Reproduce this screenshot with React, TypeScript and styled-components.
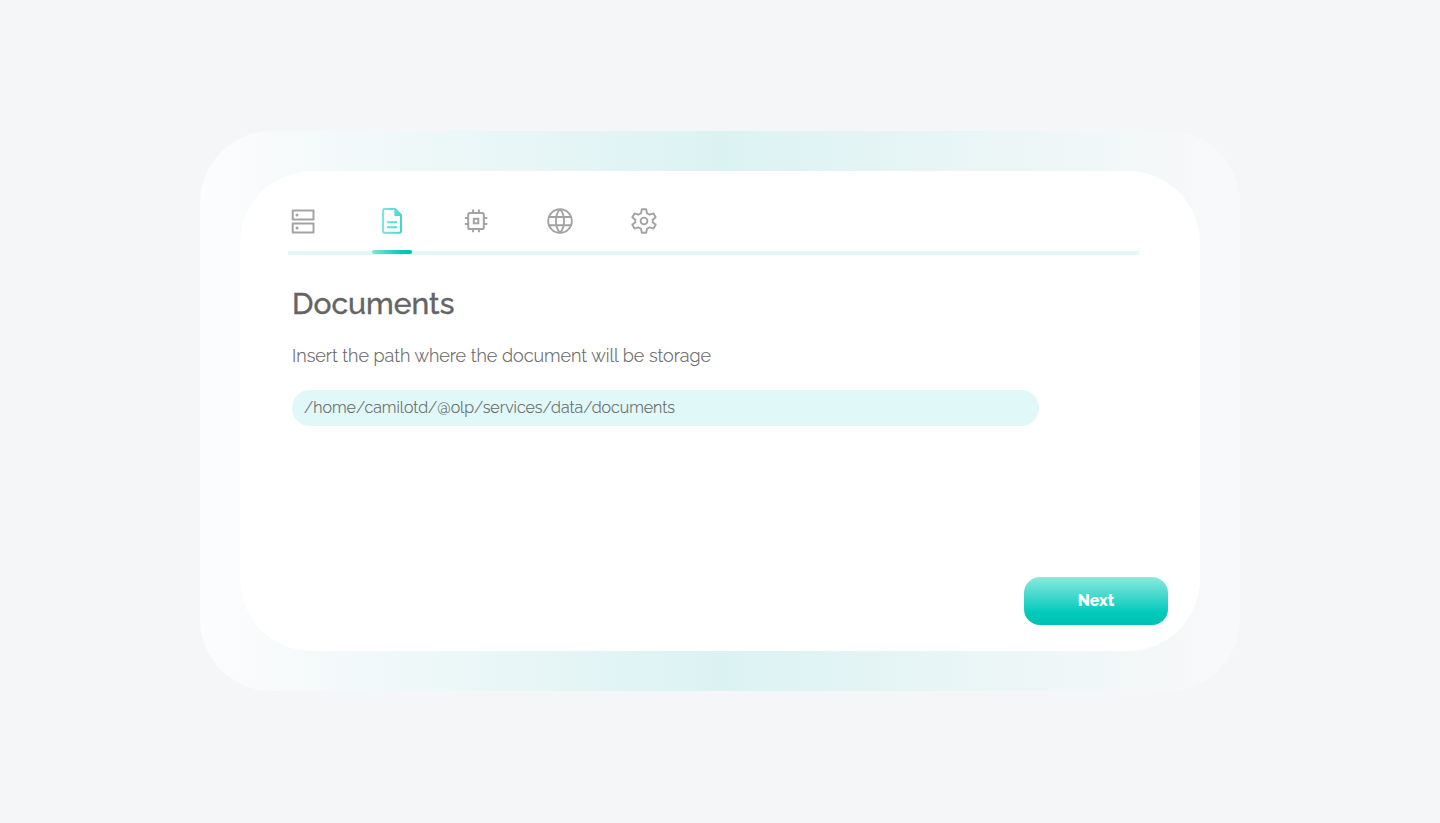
import React from "react";
import styled, { createGlobalStyle } from "styled-components";

const GlobalStyle = createGlobalStyle`
  * { box-sizing: border-box; }
  body {
    margin: 0;
    background: #f4f6f8;
    color: #646464;
    font-family: Raleway, Lato, sans-serif;
  }
`;

const Page = styled.main`
  height: 822px;
  display: flex;
  align-items: center;
  justify-content: center;
`;

const Frame = styled.div`
  width: 1040px;
  height: 560px;
  padding: 40px;
  border-radius: 72px;
  background: linear-gradient(90deg, #fcfcfd 0%, #dbf2f3 50%, #f9f9fa 100%);
`;

const Card = styled.section`
  width: 960px;
  height: 480px;
  padding: 30px 32px 26px 48px;
  border-radius: 72px;
  background: #fff;
  display: flex;
  flex-direction: column;
`;

const Tabs = styled.nav`
  width: 851px;
  height: 54px;
  display: flex;
  gap: 44px;
  border-bottom: 4px solid #e0f8f8;
`;

const Tab = styled.button<{ $start?: boolean }>`
  width: 40px;
  height: 53px;
  padding: 4px 0 0;
  border: 0;
  background: none;
  color: #a3a3a3;
  display: flex;
  flex-direction: column;
  align-items: ${(p) => (p.$start ? "flex-start" : "center")};
  justify-content: space-between;

  svg { display: block; flex: none; }
`;

const Marker = styled.span`
  width: 40px;
  height: 4px;
  border-radius: 2px;
  background: linear-gradient(90deg, #80e5da, #00c9b9 75%, #00c1b2);
`;

const Title = styled.h1`
  margin: 30px 0 0 4px;
  font-size: 30px;
  line-height: 38px;
  font-weight: 500;
  -webkit-text-stroke: 0.35px currentColor;
`;

const Hint = styled.p`
  margin: 21px 0 0 4px;
  font-size: 18px;
  line-height: 24px;
  font-weight: 300;
  -webkit-text-stroke: 0.15px currentColor;
`;

const PathInput = styled.input`
  width: 747px;
  height: 36px;
  flex: none;
  margin: 22px 0 0 4px;
  padding: 0 12px 2px;
  border: 0;
  border-radius: 18px;
  outline: 0;
  background: #e0f8f7;
  color: #646464;
  font: 300 16px Raleway, Lato, sans-serif;
  -webkit-text-stroke: 0.15px currentColor;
`;

const NextButton = styled.button`
  width: 144px;
  height: 48px;
  flex: none;
  margin: auto 0 0;
  padding: 0 0 2px;
  align-self: flex-end;
  border: 0;
  border-radius: 16px;
  background: linear-gradient(180deg, #8be9dd 0%, #00cabb 75%, #00c1b2 100%);
  color: #fff;
  font: 800 16px Raleway, Lato, sans-serif;
`;

const iconProps = { width: 32, height: 32, viewBox: "0 0 32 32", fill: "none", strokeWidth: 2 };

const ServerIcon = () => (
  <svg {...iconProps} width={30} viewBox="1 0 30 32" stroke="currentColor" strokeLinejoin="round">
    <rect x="5.7" y="5.6" width="20.8" height="9" />
    <rect x="5.7" y="18.6" width="20.8" height="9" />
    <circle cx="10" cy="10.1" r="1.5" fill="currentColor" stroke="none" />
    <circle cx="10" cy="23.1" r="1.5" fill="currentColor" stroke="none" />
  </svg>
);

const DocumentIcon = () => (
  <svg {...iconProps} stroke="url(#mint)" strokeLinejoin="round">
    <defs>
      <linearGradient id="mint" x1="6" y1="0" x2="27" y2="0" gradientUnits="userSpaceOnUse">
        <stop stopColor="#7de7dc" />
        <stop offset="1" stopColor="#3bd9cb" />
      </linearGradient>
    </defs>
    <path d="M19 4H8.2A1.2 1.2 0 0 0 7 5.2v21.4a1.2 1.2 0 0 0 1.2 1.2h15.6a1.2 1.2 0 0 0 1.2-1.2V10z" />
    <path d="M18.4 3.2V11H26z" fill="url(#mint)" stroke="none" />
    <path d="M11 17.19L21 17.21M11 22.19L21 22.21" />
  </svg>
);

const ChipIcon = () => (
  <svg {...iconProps} stroke="currentColor">
    <rect x="8.2" y="8" width="15.6" height="16" rx="1.6" />
    <rect x="13.8" y="13.8" width="4.5" height="4.5" />
    <path d="M13.1 8V4.6M18.9 8V4.6M13.1 24v3.3M18.9 24v3.3M8 13.1H4.9M8 18.9H4.9M24 13.1h3.3M24 18.9h3.3" />
  </svg>
);

const GlobeIcon = () => (
  <svg {...iconProps} stroke="currentColor" strokeWidth={1.9}>
    <circle cx="16" cy="16" r="11.8" />
    <path d="M16 4.2C10.6 10 10.6 22 16 27.8M16 4.2C21.4 10 21.4 22 16 27.8M4.8 12h22.4M4.8 20.2h22.4" />
  </svg>
);

const GearIcon = () => (
  <svg {...iconProps} stroke="currentColor" strokeWidth={1.9} strokeLinejoin="round">
    <path d="M13.8 4.2h4.4l.7 3.9 2.8 1.6 3.8-1.3 2.2 3.8-3 2.6v2.4l3 2.6-2.2 3.8-3.8-1.3-2.8 1.6-.7 3.9h-4.4l-.7-3.9-2.8-1.6-3.8 1.3-2.2-3.8 3-2.6v-2.4l-3-2.6 2.2-3.8 3.8 1.3 2.8-1.6z" />
    <circle cx="16" cy="16" r="3.4" />
  </svg>
);

export default function App() {
  return (
    <>
      <GlobalStyle />
      <Page>
        <Frame>
          <Card>
            <Tabs>
              <Tab $start aria-label="Storage"><ServerIcon /></Tab>
              <Tab aria-label="Documents"><DocumentIcon /><Marker /></Tab>
              <Tab aria-label="Processing"><ChipIcon /></Tab>
              <Tab aria-label="Network"><GlobeIcon /></Tab>
              <Tab aria-label="Settings"><GearIcon /></Tab>
            </Tabs>
            <Title>Documents</Title>
            <Hint>Insert the path where the document will be storage</Hint>
            <PathInput aria-label="Documents path" defaultValue="/home/camilotd/@olp/services/data/documents" />
            <NextButton>Next</NextButton>
          </Card>
        </Frame>
      </Page>
    </>
  );
}
